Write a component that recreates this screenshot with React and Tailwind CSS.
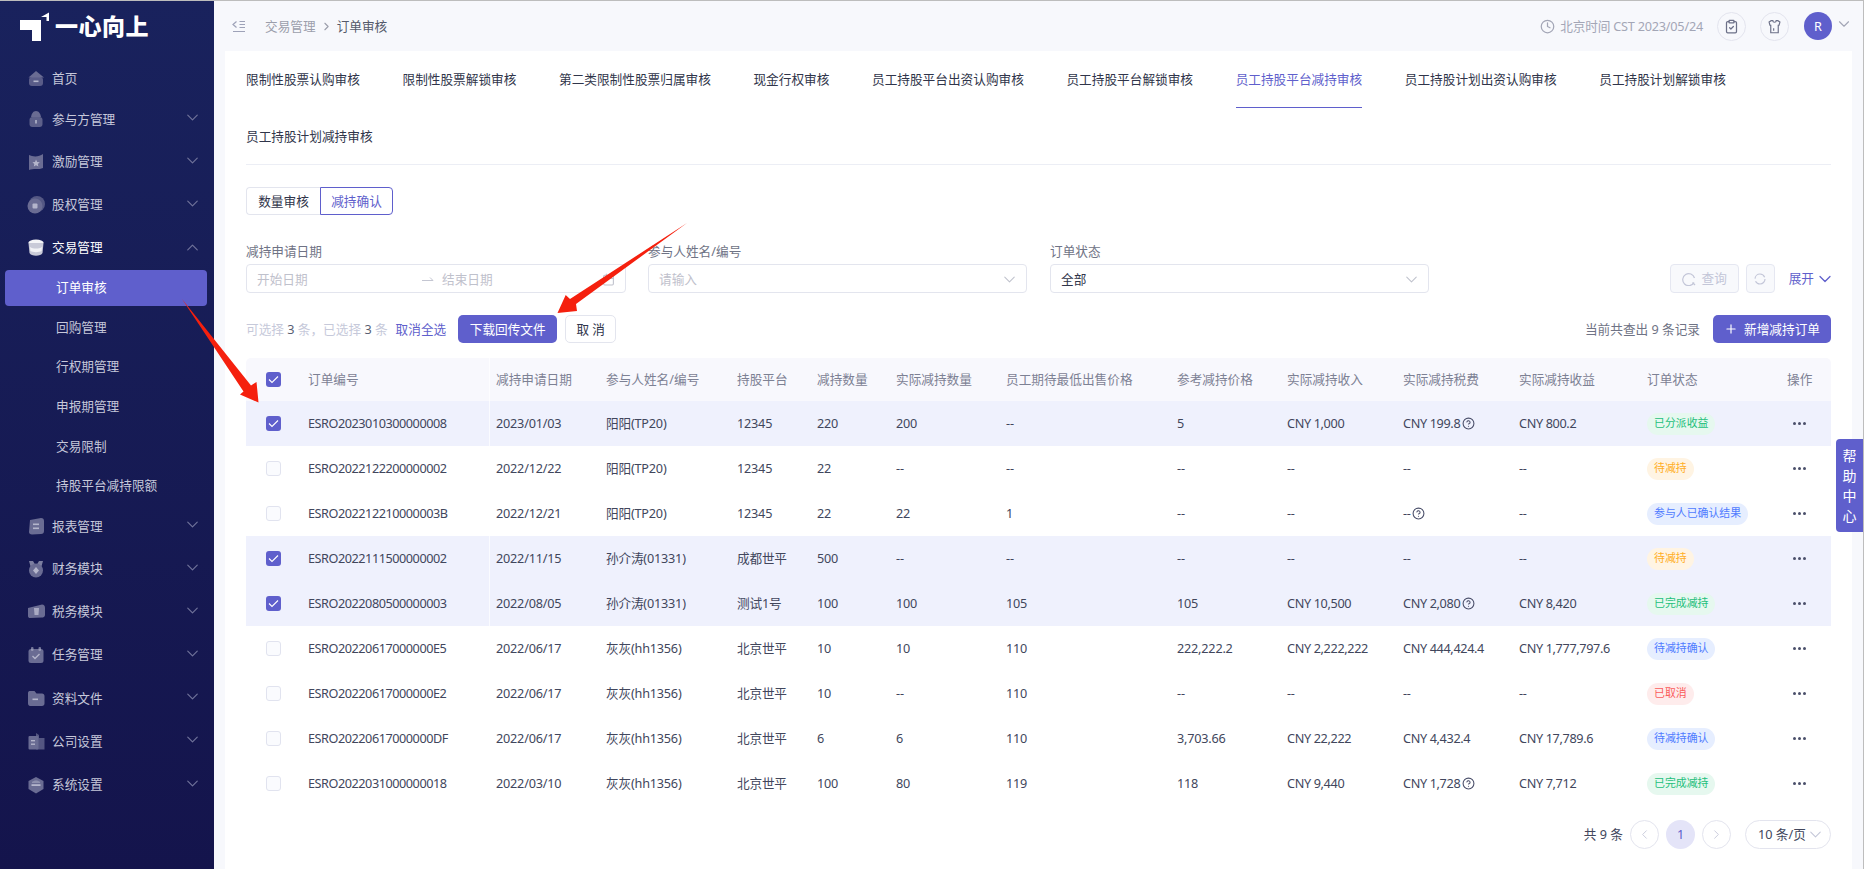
import React from 'react';
import { ChevronDown, ChevronUp, ChevronLeft, ChevronRight, Clock, ClipboardCheck, CircleHelp, Plus, Calendar } from 'lucide-react';

const NavIcon = ({ name, active }) => {
  const base = active ? '#c9cad8' : '#6a6c93';
  const light = active ? '#f2f2f6' : '#b4b5cb';
  const shapes = {
    home: <><path d="M9 1 L17 7.5 L1.5 7.5 Z" fill={base} /><rect x="2" y="7" width="14" height="9" rx="3" fill={base} opacity="0.8" /><rect x="6.5" y="10.5" width="5" height="1.6" fill={light} /></>,
    lock: <><path d="M9 1 C12 1 13.5 4 14 7 L4 7 C4.5 4 6 1 9 1 Z" fill={base} /><rect x="2.5" y="7" width="13" height="10" rx="3" fill={base} opacity="0.85" /><rect x="8.2" y="10" width="1.6" height="3.5" fill={light} /></>,
    flag: <><path d="M2 2 C6 4 12 4 16 1 L16 15 C12 17 6 15 2 17 Z" fill={base} /><path d="M9 6.5 L10.2 9 L12.8 9.3 L10.8 11 L11.4 13.4 L9 12.2 L6.8 13.4 L7.3 11 L5.4 9.3 L8 9 Z" fill={light} /></>,
    pie: <><circle cx="10" cy="8" r="8" fill={base} opacity="0.75" /><circle cx="8" cy="10" r="7.5" fill={base} /><rect x="5.5" y="7.5" width="5" height="5" rx="1" fill={light} /></>,
    coins: <><ellipse cx="9" cy="3.5" rx="7.5" ry="3" fill="#f4f4f7" /><path d="M1.5 4 L16.5 4 L15.5 14 C14 17.5 4 17.5 2.5 14 Z" fill={base} /><path d="M3 8 C6 10 12 10 15 8 L14.6 12 C12 13.5 6 13.5 3.4 12 Z" fill={light} /></>,
    report: <><path d="M3 3 L14 1 C16 1 17 2 17 4 L17 14 C17 16 16 17 14 17 L5 17.5 C3 17.5 2 16.5 2 15 Z" fill={base} /><rect x="6" y="6.5" width="6" height="1.6" fill={light} /><rect x="6" y="10.5" width="6" height="1.6" fill={light} /></>,
    medal: <><path d="M2 1 L6 1 L9 6 L12 1 L16 1 L14 8 L4 8 Z" fill={light} opacity="0.65" /><circle cx="9" cy="10.5" r="7" fill={base} /><path d="M9 7 L12 10.5 L9 14 L6 10.5 Z" fill={light} /></>,
    ticket: <><path d="M1 5 L15 1.5 C17 1.5 18 3 18 5 L18 12 C18 14 16 14.5 15 14.5 L3 15 C2 15 1 14.5 1 13 Z" fill={base} /><path d="M7 5 L12 5 L11.5 12 L7.5 12 Z" fill={light} opacity="0.85" /></>,
    task: <><rect x="1.5" y="3" width="15" height="14" rx="2.5" fill={base} /><rect x="4" y="1" width="2.5" height="4" rx="1" fill={light} opacity="0.6" /><rect x="11.5" y="1" width="2.5" height="4" rx="1" fill={light} opacity="0.6" /><path d="M5.5 10 L8 12.5 L12.5 8" stroke={light} strokeWidth="1.4" fill="none" /></>,
    folder: <><path d="M1 4 C1 2.5 2 2 3 2 L7.5 2 L9.5 4.5 L15 4.5 C16.5 4.5 17.5 5.5 17.5 7 L17.5 14.5 C17.5 16 16.5 17 15 17 L3 17 C2 17 1 16 1 14.5 Z" fill={base} /><rect x="5.5" y="9.5" width="5.5" height="1.6" fill={light} /></>,
    office: <><rect x="1.5" y="4" width="10" height="13.5" rx="1" fill={base} /><path d="M9 1 L12 3 L12 6 L17.5 6 L17.5 17.5 L9 17.5 Z" fill={base} opacity="0.75" /><rect x="4" y="8" width="4" height="1.4" fill={light} /><rect x="4" y="11.5" width="4" height="1.4" fill={light} /></>,
    gear: <><path d="M9 1 L16.5 5 L16.5 13 L9 17.5 L1.5 13 L1.5 5 Z" fill={base} /><rect x="4.5" y="8.2" width="9" height="1.8" fill={light} /><path d="M5 6 C7 4 11 4 13 6 L13 7 L5 7 Z" fill={light} opacity="0.5" /></>,
  };
  return (
    <svg width="18" height="18" viewBox="0 0 18 18" className="shrink-0 blur-[0.5px]">
      {shapes[name]}
    </svg>
  );
};

const NavItem = ({ icon, label, open, active, hClass }) => (
  <div className={`flex items-center pl-[27px] pr-[12.5px] ${hClass}`}>
    <NavIcon name={icon} active={active} />
    <span className={`ml-[7px] flex-1 ${active ? 'text-white' : 'text-[#c6c8da]'}`}>{label}</span>
    {open !== undefined && (open
      ? <ChevronUp size={19} strokeWidth={1.5} className="text-[#6f7299] mt-[-1px]" />
      : <ChevronDown size={19} strokeWidth={1.5} className="text-[#6f7299] mt-[-3px]" />)}
  </div>
);

const SubItem = ({ label }) => (
  <div className="h-[39.6px] flex items-center pl-[56px] text-[#c6c8da]">{label}</div>
);

const Sidebar = () => (
  <aside className="w-[214px] shrink-0 h-full bg-linear-to-b from-[#19225d] to-[#14144c]">
    <div className="h-[57.5px] flex pl-[20px] pt-[6px]">
      <svg width="30" height="34" viewBox="0 0 30 34" className="shrink-0">
        <path d="M0 13 L21 13 L21 34 L12 34 L12 23 L0 23 Z M21 10 L29 5.5 L29 14 L26.5 14 L26.5 10 Z" fill="#fff" />
      </svg>
      <span className="ml-[5px] mt-[4px] text-white text-[23px] leading-[30px] font-black tracking-[0.5px]">一心向上</span>
    </div>
    <NavItem icon="home" label="首页" hClass="h-[40px]" />
    <NavItem icon="lock" label="参与方管理" open={false} hClass="h-[41.5px]" />
    <NavItem icon="flag" label="激励管理" open={false} hClass="h-[43px]" />
    <NavItem icon="pie" label="股权管理" open={false} hClass="h-[43px]" />
    <NavItem icon="coins" label="交易管理" open active hClass="h-[43.5px]" />
    <div className="h-[38px]">
      <div className="ml-[5px] mr-[7px] h-[36px] rounded-[4px] bg-[#5f5fcc] flex items-center pl-[51px] text-white">订单审核</div>
    </div>
    <SubItem label="回购管理" />
    <SubItem label="行权期管理" />
    <SubItem label="申报期管理" />
    <SubItem label="交易限制" />
    <SubItem label="持股平台减持限额" />
    <NavItem icon="report" label="报表管理" open={false} hClass="h-[41.5px]" />
    <NavItem icon="medal" label="财务模块" open={false} hClass="h-[43.2px]" />
    <NavItem icon="ticket" label="税务模块" open={false} hClass="h-[43.2px]" />
    <NavItem icon="task" label="任务管理" open={false} hClass="h-[43.2px]" />
    <NavItem icon="folder" label="资料文件" open={false} hClass="h-[43.2px]" />
    <NavItem icon="office" label="公司设置" open={false} hClass="h-[43.2px]" />
    <NavItem icon="gear" label="系统设置" open={false} hClass="h-[43.2px]" />
  </aside>
);

const Header = () => (
  <header className="h-[50px] shrink-0 flex items-center pl-[18px] pr-[10.5px]">
    <svg width="14" height="13" viewBox="0 0 14 13" fill="none" stroke="#9ea2b8" strokeWidth="1.2" className="shrink-0">
      <path d="M4.5 1.5 L1 4.5 L4.5 7.5" />
      <path d="M7.5 1.5 H13 M7.5 4.5 H13 M7.5 7.5 H13 M1 11.5 H13" />
    </svg>
    <span className="ml-[19px] text-[#9b9eab]">交易管理</span>
    <ChevronRight size={13} className="mx-[4px] text-[#9b9eab]" />
    <span className="text-[#555a6b]">订单审核</span>
    <div className="ml-auto flex items-center">
      <Clock size={15} className="text-[#a3a6b6]" />
      <span className="ml-[5px] text-[#a3a6b6] tracking-[-0.2px]">北京时间 CST 2023/05/24</span>
      <div className="ml-[14px] w-[29px] h-[29px] rounded-full border border-[#e3e4ee] flex items-center justify-center">
        <ClipboardCheck size={15} className="text-[#6c7088]" />
      </div>
      <div className="ml-[14px] w-[29px] h-[29px] rounded-full border border-[#e3e4ee] flex items-center justify-center">
        <svg width="15" height="15" viewBox="0 0 18 18" fill="none" stroke="#6c7088" strokeWidth="1.4">
          <path d="M5 2 L7 2 C7 4.5 11 4.5 11 2 L13 2 L15.5 3.5 L14.5 7.5 L13.5 7.5 L13.5 16.5 L4.5 16.5 L4.5 7.5 L3.5 7.5 L2.5 3.5 Z" />
          <path d="M8 11 L8 14" />
        </svg>
      </div>
      <div className="ml-[15px] w-[28px] h-[28px] rounded-full bg-[#5f5fcc] text-white flex items-center justify-center">R</div>
      <ChevronDown size={18} strokeWidth={1.5} className="ml-[2.5px] mt-[-4px] text-[#a3a6b6]" />
    </div>
  </header>
);

const Tab = ({ label, active }) => (
  <div className={`h-[57px] flex items-center ${active ? 'text-[#5f5fcc] border-b border-[#5f5fcc]' : 'text-[#30354a]'}`}>{label}</div>
);

const tabsTop = ['限制性股票认购审核', '限制性股票解锁审核', '第二类限制性股票归属审核', '现金行权审核', '员工持股平台出资认购审核', '员工持股平台解锁审核', '员工持股平台减持审核', '员工持股计划出资认购审核', '员工持股计划解锁审核'];

const Field = ({ label, className, children }) => (
  <div className={className}>
    <div className="h-[20px] leading-[21px] text-[#6f7385]">{label}</div>
    <div className="mt-[3px] h-[29px] rounded-[4px] border border-[#e3e5ee] flex items-center pl-[10px] pr-[7px] pt-px text-[#bfc1cc]">{children}</div>
  </div>
);

const Filters = () => (
  <div className="mt-[26px] flex items-start">
    <Field label="减持申请日期" className="w-[380px]">
      <span className="w-[165px]">开始日期</span>
      <svg width="12" height="6" viewBox="0 0 12 6" fill="none" stroke="#c4c6d2" strokeWidth="1"><path d="M0 4.5 H11 L8 1.5" /></svg>
      <span className="ml-[8px]">结束日期</span>
      <Calendar size={13} className="ml-auto mr-[3px]" />
    </Field>
    <Field label="参与人姓名/编号" className="ml-[22px] w-[379px]">
      <span>请输入</span>
      <ChevronDown size={19} strokeWidth={1.3} className="ml-auto" />
    </Field>
    <Field label="订单状态" className="ml-[23px] w-[379px]">
      <span className="text-[#30354a]">全部</span>
      <ChevronDown size={19} strokeWidth={1.3} className="ml-auto" />
    </Field>
    <div className="ml-auto mt-[23px] flex items-center">
      <div className="w-[69px] h-[29px] rounded-[4px] border border-[#e5e7f1] bg-[#f8f9fc] flex items-center justify-center text-[#c3c6d8]">
        <svg width="14" height="14" viewBox="0 0 14 14" fill="none" stroke="#c3c6d8" strokeWidth="1.2"><path d="M12 10.5 A6 6 0 1 1 12.5 6" /><path d="M10.5 10.5 L13 13" /></svg>
        <span className="ml-[6px]">查询</span>
      </div>
      <div className="ml-[7px] w-[29px] h-[29px] rounded-[4px] border border-[#e5e7f1] bg-[#f8f9fc] flex items-center justify-center">
        <svg width="12" height="12" viewBox="0 0 12 12" fill="none" stroke="#c3c6d8" strokeWidth="1.2"><circle cx="6" cy="6" r="5" strokeDasharray="13 2.7" /></svg>
      </div>
      <span className="ml-[14px] text-[#5f5fcc]">展开</span>
      <ChevronDown size={20} strokeWidth={1.5} className="ml-[1px] mr-[-4px] text-[#5f5fcc]" />
    </div>
  </div>
);

const Toolbar = () => (
  <div className="mt-[22px] h-[28px] flex items-center">
    <span className="text-[#c6c9da]">可选择 <span className="text-[#5a5f73]">3</span> 条，已选择 <span className="text-[#5a5f73]">3</span> 条</span>
    <span className="ml-[8px] text-[#5f5fcc]">取消全选</span>
    <div className="ml-[12px] w-[99px] h-[28px] rounded-[5px] bg-[#5f5fcc] text-white flex items-center justify-center">下载回传文件</div>
    <div className="ml-[8px] w-[51px] h-[28px] rounded-[5px] border border-[#e3e5ee] text-[#30354a] flex items-center justify-center">取 消</div>
    <span className="ml-auto text-[#6f7385]">当前共查出 9 条记录</span>
    <div className="ml-[13px] w-[118px] h-[28px] rounded-[5px] bg-[#5f5fcc] text-white flex items-center justify-center">
      <Plus size={14} />
      <span className="ml-[6px]">新增减持订单</span>
    </div>
  </div>
);

const GRID = 'grid grid-cols-[62px_188px_110px_131px_80px_79px_110px_171px_110px_116px_116px_128px_140px_44px] items-center';

const Check = ({ on }) => (
  <div className={`ml-[20px] w-[15px] h-[15px] rounded-[3px] flex items-center justify-center ${on ? 'bg-[#5f5fcc]' : 'border border-[#e1e3ef] bg-[#fafbfe]'}`}>
    {on && <svg width="11" height="9" viewBox="0 0 11 9" fill="none" stroke="#fff" strokeWidth="1.1"><path d="M1 4.5 L4 7.5 L10 1.5" /></svg>}
  </div>
);

const BADGE = {
  green: 'bg-[#e6f8ef] text-[#1dbf7b]',
  orange: 'bg-[#fff4e3] text-[#ffae1f]',
  blue: 'bg-[#e6eeff] text-[#4f7bff]',
  red: 'bg-[#feecec] text-[#fa5b5b]',
};

const rows = [
  { on: true, id: 'ESRO2023010300000008', date: '2023/01/03', who: '阳阳(TP20)', plat: '12345', qty: '220', real: '200', low: '--', ref: '5', inc: 'CNY 1,000', tax: 'CNY 199.8', q: true, net: 'CNY 800.2', st: '已分派收益', c: 'green' },
  { id: 'ESRO2022122200000002', date: '2022/12/22', who: '阳阳(TP20)', plat: '12345', qty: '22', real: '--', low: '--', ref: '--', inc: '--', tax: '--', net: '--', st: '待减持', c: 'orange' },
  { id: 'ESRO202212210000003B', date: '2022/12/21', who: '阳阳(TP20)', plat: '12345', qty: '22', real: '22', low: '1', ref: '--', inc: '--', tax: '--', q: true, net: '--', st: '参与人已确认结果', c: 'blue' },
  { on: true, id: 'ESRO2022111500000002', date: '2022/11/15', who: '孙介涛(01331)', plat: '成都世平', qty: '500', real: '--', low: '--', ref: '--', inc: '--', tax: '--', net: '--', st: '待减持', c: 'orange' },
  { on: true, id: 'ESRO2022080500000003', date: '2022/08/05', who: '孙介涛(01331)', plat: '测试1号', qty: '100', real: '100', low: '105', ref: '105', inc: 'CNY 10,500', tax: 'CNY 2,080', q: true, net: 'CNY 8,420', st: '已完成减持', c: 'green' },
  { id: 'ESRO20220617000000E5', date: '2022/06/17', who: '灰灰(hh1356)', plat: '北京世平', qty: '10', real: '10', low: '110', ref: '222,222.2', inc: 'CNY 2,222,222', tax: 'CNY 444,424.4', net: 'CNY 1,777,797.6', st: '待减持确认', c: 'blue' },
  { id: 'ESRO20220617000000E2', date: '2022/06/17', who: '灰灰(hh1356)', plat: '北京世平', qty: '10', real: '--', low: '110', ref: '--', inc: '--', tax: '--', net: '--', st: '已取消', c: 'red' },
  { id: 'ESRO20220617000000DF', date: '2022/06/17', who: '灰灰(hh1356)', plat: '北京世平', qty: '6', real: '6', low: '110', ref: '3,703.66', inc: 'CNY 22,222', tax: 'CNY 4,432.4', net: 'CNY 17,789.6', st: '待减持确认', c: 'blue' },
  { id: 'ESRO2022031000000018', date: '2022/03/10', who: '灰灰(hh1356)', plat: '北京世平', qty: '100', real: '80', low: '119', ref: '118', inc: 'CNY 9,440', tax: 'CNY 1,728', q: true, net: 'CNY 7,712', st: '已完成减持', c: 'green' },
];

const heads = ['减持申请日期', '参与人姓名/编号', '持股平台', '减持数量', '实际减持数量', '员工期待最低出售价格', '参考减持价格', '实际减持收入', '实际减持税费', '实际减持收益', '订单状态', '操作'];

const Table = () => (
  <div className="mt-[15px] text-[#41465c]">
    <div className={`${GRID} h-[43px] bg-[#f8f8fd] rounded-t-[5px] text-[#7d8194]`}>
      <Check on />
      <div className="relative self-stretch flex items-center">
        订单编号
        <span className="absolute left-[181px] top-0 bottom-0 w-px bg-white/70" />
      </div>
      {heads.map((h) => <div key={h} className="whitespace-nowrap">{h}</div>)}
    </div>
    {rows.map((r) => (
      <div key={r.id} className={`${GRID} h-[45px] tracking-[-0.2px] ${r.on ? 'bg-[#eff1fd]' : ''}`}>
        <Check on={r.on} />
        <div className="relative self-stretch flex items-center tracking-[-0.45px]">
          {r.id}
          <span className="absolute left-[181px] top-0 bottom-0 w-px bg-white/70" />
        </div>
        <div>{r.date}</div>
        <div>{r.who}</div>
        <div>{r.plat}</div>
        <div>{r.qty}</div>
        <div>{r.real}</div>
        <div>{r.low}</div>
        <div>{r.ref}</div>
        <div className="whitespace-nowrap tracking-[-0.35px]">{r.inc}</div>
        <div className="flex items-center whitespace-nowrap tracking-[-0.35px]">
          {r.tax}
          {r.q && <CircleHelp size={13} className="ml-[2px] text-[#4a4f6a]" />}
        </div>
        <div className="whitespace-nowrap tracking-[-0.35px]">{r.net}</div>
        <div>
          <span className={`inline-flex h-[22px] items-center rounded-full px-[7px] text-[10.9px] tracking-normal whitespace-nowrap ${BADGE[r.c]}`}>{r.st}</span>
        </div>
        <div className="flex gap-[2px] pl-[6px]">
          <span className="w-[3px] h-[3px] rounded-full bg-[#4a4f6a]" />
          <span className="w-[3px] h-[3px] rounded-full bg-[#4a4f6a]" />
          <span className="w-[3px] h-[3px] rounded-full bg-[#4a4f6a]" />
        </div>
      </div>
    ))}
  </div>
);

const Pagination = () => (
  <div className="mt-[14px] flex items-center justify-end text-[#41465c]">
    <span>共 9 条</span>
    <div className="ml-[7px] w-[29px] h-[29px] rounded-full border border-[#e3e4ee] flex items-center justify-center"><ChevronLeft size={15} strokeWidth={1.4} className="text-[#c3c6d8]" /></div>
    <div className="ml-[7px] w-[29px] h-[29px] rounded-full bg-[#e4e4f8] text-[#5f5fcc] flex items-center justify-center">1</div>
    <div className="ml-[7px] w-[29px] h-[29px] rounded-full border border-[#e3e4ee] flex items-center justify-center"><ChevronRight size={15} strokeWidth={1.4} className="text-[#c3c6d8]" /></div>
    <div className="ml-[14px] w-[86px] h-[29px] rounded-full border border-[#e3e4ee] flex items-center pl-[12px]">
      <span>10 条/页</span>
      <ChevronDown size={19} strokeWidth={1.3} className="text-[#c3c6d8]" />
    </div>
  </div>
);

const App = () => (
  <div className="relative w-[1864px] h-[869px] overflow-hidden flex border-t border-r border-[#bdbdbd] bg-[#f7f8fc] text-[12.67px] font-['Noto_Sans','Noto_Sans_CJK_SC',sans-serif]">
    <Sidebar />
    <main className="flex-1 min-w-0 flex flex-col">
      <Header />
      <div className="flex-1 mx-[11px] bg-white px-[21px]">
        <div className="flex gap-x-[42.6px]">
          {tabsTop.map((t) => <Tab key={t} label={t} active={t === '员工持股平台减持审核'} />)}
        </div>
        <div className="flex border-b border-[#eceef5]">
          <div className="h-[56px] flex items-center text-[#30354a]">员工持股计划减持审核</div>
        </div>
        <div className="mt-[22px] flex">
          <div className="w-[74px] h-[28px] rounded-l-[4px] border border-r-0 border-[#e3e5ee] text-[#30354a] flex items-center justify-center">数量审核</div>
          <div className="w-[73px] h-[28px] rounded-r-[4px] border border-[#5f5fcc] text-[#5f5fcc] flex items-center justify-center">减持确认</div>
        </div>
        <Filters />
        <Toolbar />
        <Table />
        <Pagination />
      </div>
    </main>
    <div className="absolute right-0 top-[438px] w-[27px] h-[93px] rounded-l-[4px] bg-[#5f5fcc] text-white text-[14px] leading-[20px] flex flex-col items-center justify-center">
      <span>帮</span><span>助</span><span>中</span><span>心</span>
    </div>
    <svg width="1864" height="869" className="absolute left-0 top-[-1px] pointer-events-none">
      <path d="M182 299 L251 385.5 L256.5 382 L258.5 402.5 L240 394.5 L243.5 391.5 Z" fill="#f5200e" />
      <path d="M687 223 L576 304 L577 311 L557.5 313 L565.7 295 L570 299 Z" fill="#f5200e" />
    </svg>
  </div>
);

export default App;
